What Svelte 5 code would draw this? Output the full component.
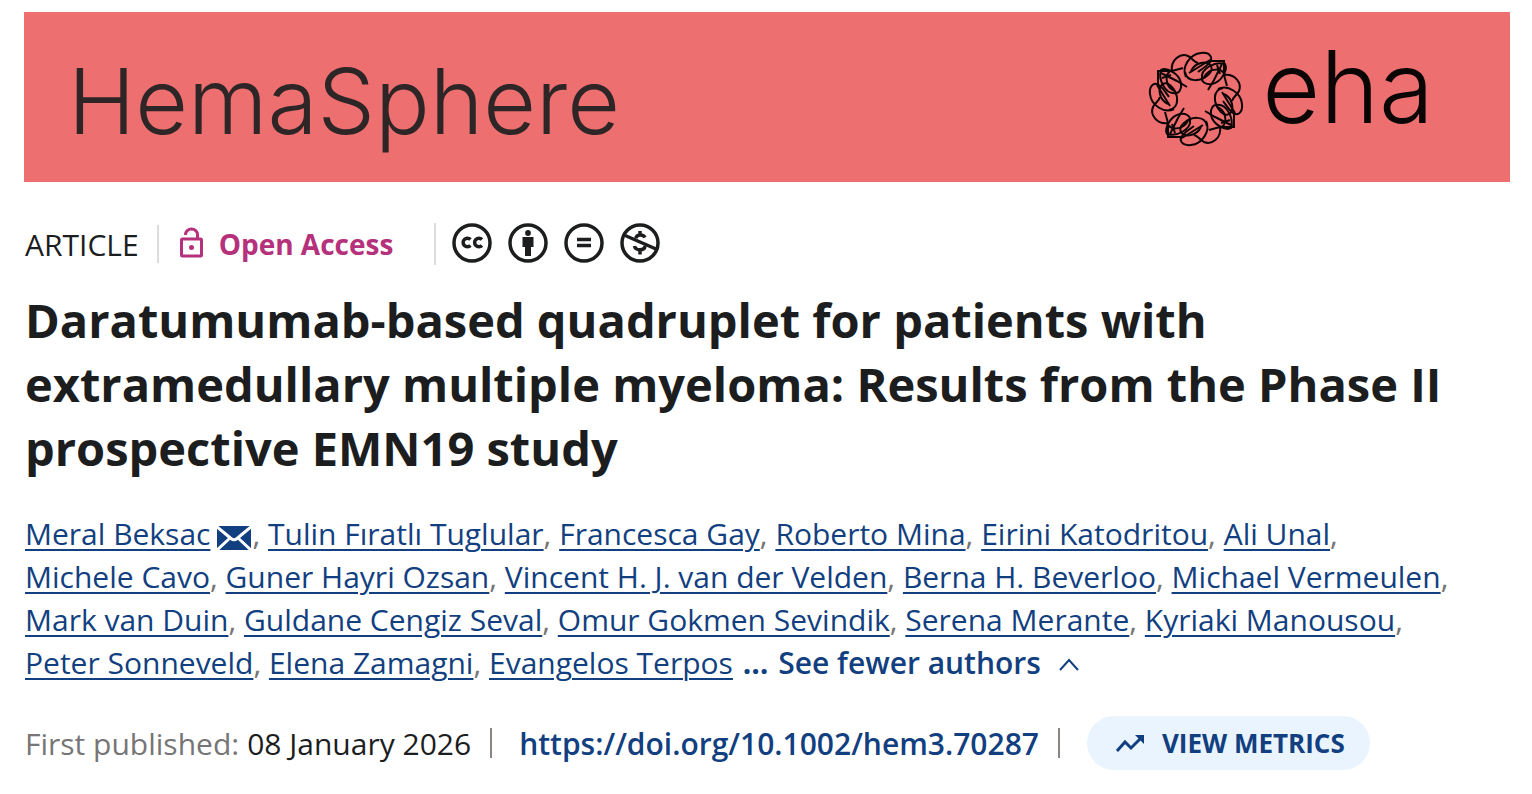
<script>
	const authors = [
		'Meral Beksac',
		'Tulin Fıratlı Tuglular',
		'Francesca Gay',
		'Roberto Mina',
		'Eirini Katodritou',
		'Ali Unal',
		'Michele Cavo',
		'Guner Hayri Ozsan',
		'Vincent H. J. van der Velden',
		'Berna H. Beverloo',
		'Michael Vermeulen',
		'Mark van Duin',
		'Guldane Cengiz Seval',
		'Omur Gokmen Sevindik',
		'Serena Merante',
		'Kyriaki Manousou',
		'Peter Sonneveld',
		'Elena Zamagni',
		'Evangelos Terpos'
	];

	// the knot repeats the same strand four times round the ring
	const quarters = [0, 90, 180, 270];
</script>

<main class="page">
	<header class="banner">
		<a class="journal" href="#journal">HemaSphere</a>
		<a class="society" href="#eha">
			<svg class="knot" viewBox="-48 -48 96 96" width="96" height="96" aria-hidden="true">
				{#each quarters as angle}
					<g transform="rotate({angle})">
						<path d="M-24-27C-26-40-15-46-8-43C-4-41-2-37 2-36" />
						<path d="M-10-22C-15-32-6-45 5-46C14-47 18-41 13-36C11-33 6-30 2-27" />
						<path d="M-11-27C-9-16 5-17 13-25C19-31 14-38 5-36C0-35-3-32-5-28" />
						<path d="M6-20C4-31 20-38 29-35C32-30 26-17 16-15C10-14 6-17 6-20z" />
						<path d="M8-22C14-32 26-31 29-24M15-38L28-38L28-24L31-13" />
						<path d="M-7-26L14-39M12-9L18-19L26-35M21-34L24-25" />
					</g>
				{/each}
			</svg>
			<span>eha</span>
		</a>
	</header>

	<article>
		<div class="meta">
			<span class="kind">ARTICLE</span>
			<span class="access">
				<svg viewBox="0 0 24 34" width="24" height="34" aria-hidden="true">
					<rect x="2.500" y="12" width="20" height="17" rx="1" />
					<path d="M6.500 8V7.500a6 5.500 0 0 1 12 0V12" />
					<circle cx="12.500" cy="20.500" r="2.500" />
				</svg>
				Open Access
			</span>
			<a class="licence" href="#licence" aria-label="Creative Commons licence">
				<svg viewBox="0 0 40 40" width="40" height="40">
					<circle cx="20" cy="20" r="18" />
					<path d="M18.500 16.500a4.300 4.300 0 1 0 0 6M30 16.500a4.300 4.300 0 1 0 0 6" />
				</svg>
				<svg viewBox="0 0 40 40" width="40" height="40">
					<circle cx="20" cy="20" r="18" />
					<path class="solid" d="M14.500 14h11v10H23v9h-6v-9h-2.500z" />
					<circle class="solid" cx="20" cy="10" r="2.900" />
				</svg>
				<svg viewBox="0 0 40 40" width="40" height="40">
					<circle cx="20" cy="20" r="18" />
					<path d="M13 16.500h14M13 22.500h14" />
				</svg>
				<svg viewBox="0 0 40 40" width="40" height="40">
					<circle cx="20" cy="20" r="18" />
					<path d="M4 12L36 26" />
					<path d="M25 14.500c-2-4-9-3-9 1M14.500 23c1 5 10 5 10.500 0M20 8v4M20 27v4.500" />
				</svg>
			</a>
		</div>

		<h1>
			Daratumumab-based quadruplet for patients with extramedullary multiple myeloma: Results from
			the Phase II prospective EMN19 study
		</h1>

		<p class="authors">
			{#each authors as author, i}
				<span class="author"><a href="#author-{i + 1}">{author}</a>{#if i === 0}<a class="mail" href="#mail" aria-label="Email Meral Beksac"><svg viewBox="0 0 36 26" width="36" height="26"><rect x="1" y="1" width="34" height="24" /><path d="M0 1L15 13.500Q18 16 21 13.500L36 1M0 26L14 13M36 26L22 13" /></svg></a>{/if}{#if i < authors.length - 1},{/if}</span>{' '}
			{/each}
			<button class="fewer" type="button">
				<span class="dots">…</span>
				See fewer authors
				<svg viewBox="0 0 20 14" width="20" height="14" aria-hidden="true">
					<path d="M1 12L10 2L19 12" />
				</svg>
			</button>
		</p>

		<div class="published">
			<span class="label">First published:</span>
			<time datetime="2026-01-08">08 January 2026</time>
			<span class="rule"></span>
			<a class="doi" href="https://doi.org/10.1002/hem3.70287">https://doi.org/10.1002/hem3.70287</a>
			<span class="rule"></span>
			<button class="metrics" type="button">
				<svg viewBox="0 0 30 20" width="30" height="20" aria-hidden="true">
					<path d="M2 18L10 9L16 15L26 5" />
					<path class="solid" d="M20 2H29V11z" />
				</svg>
				VIEW METRICS
			</button>
		</div>
	</article>
</main>

<style>
	:global(body) {
		margin: 0;
		background: #fff;
	}

	.page {
		padding: 12px 22px 24px 24px;
		font-family: 'Open Sans', sans-serif;
		font-size: 30px;
		color: #1c1d1e;
	}

	article {
		padding: 0 1px;
	}

	a {
		color: inherit;
		text-decoration: none;
	}

	button {
		border: 0;
		padding: 0;
		background: none;
		font: inherit;
		color: #123f80;
		cursor: pointer;
	}

	svg {
		fill: none;
		stroke: currentColor;
	}

	.solid {
		fill: currentColor;
		stroke: none;
	}

	.banner {
		display: flex;
		align-items: center;
		justify-content: space-between;
		height: 170px;
		padding: 0 76px 0 44px;
		box-sizing: border-box;
		background: #ed6f6f;
		font-family: Inter, sans-serif;
	}

	.journal {
		padding-top: 8px;
		font-size: 91px;
		font-weight: 300;
		line-height: 100px;
		color: #2e2527;
	}

	.society {
		display: flex;
		align-items: center;
		gap: 18px;
		padding-top: 4px;
		font-size: 100px;
		font-weight: 300;
		line-height: 100px;
		color: #0c0505;
	}

	.society span {
		padding-bottom: 24px;
	}

	.knot {
		stroke-width: 2;
	}

	.meta {
		display: flex;
		align-items: center;
		height: 40px;
		margin-top: 42px;
	}

	.access {
		display: flex;
		align-items: center;
		gap: 16px;
		margin: 0 41px 0 18px;
		padding-left: 20px;
		border-left: 2px solid #dcdcdc;
		line-height: 38px;
		font-size: 28px;
		font-weight: 700;
		color: #b5317c;
	}

	.access svg {
		stroke-width: 3;
	}

	.access circle {
		fill: currentColor;
		stroke: none;
	}

	.licence {
		display: flex;
		gap: 16px;
		padding-left: 16px;
		padding-bottom: 2px;
		border-left: 2px solid #dcdcdc;
	}

	.licence svg {
		stroke-width: 3.5;
	}

	h1 {
		margin: 24px 0 0;
		font-size: 47px;
		font-weight: 700;
		line-height: 64px;
	}

	.authors {
		margin: 32px 0 0;
		line-height: 43px;
		color: #767676;
	}

	.author {
		white-space: nowrap;
	}

	.authors a {
		color: #123f80;
		text-decoration: underline;
		text-decoration-thickness: 2px;
		text-underline-offset: 4px;
	}

	.authors .mail {
		margin-left: 6px;
		text-decoration: none;
	}

	.mail svg {
		vertical-align: -6px;
		stroke: #fff;
		stroke-width: 3;
	}

	.mail rect {
		fill: #123f80;
		stroke: none;
	}

	.fewer {
		font-weight: 600;
	}

	.dots {
		margin: 0 2px;
		font-weight: 700;
	}

	.fewer svg {
		margin-left: 10px;
		vertical-align: 2px;
		stroke-width: 2;
	}

	.published {
		display: flex;
		align-items: center;
		margin-top: 32px;
	}

	.label {
		margin-right: 8px;
		color: #767676;
	}

	.rule {
		width: 2px;
		height: 30px;
		margin: 0 27px 0 19px;
		background: #8a8582;
	}

	.doi {
		font-weight: 600;
		color: #123f80;
	}

	.metrics {
		display: flex;
		align-items: center;
		gap: 17px;
		height: 54px;
		padding: 0 25px 0 28px;
		border-radius: 27px;
		background: #eaf4ff;
		font-size: 26px;
		font-weight: 700;
	}

	.metrics svg {
		stroke-width: 3;
	}
</style>
